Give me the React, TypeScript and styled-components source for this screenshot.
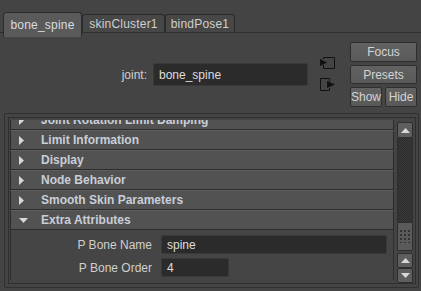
import React from 'react';
import styled, { createGlobalStyle } from 'styled-components';

const GlobalStyle = createGlobalStyle`
  html, body {
    margin: 0;
    padding: 0;
    background: #444444;
  }
  body {
    font-family: "Liberation Sans", Arial, sans-serif;
    font-size: 12px;
    color: #d2d2d2;
  }
`;

const Window = styled.div`
  width: 421px;
  height: 291px;
  background: #444444;
  display: flex;
  flex-direction: column;
  overflow: hidden;
`;

const TabBar = styled.div`
  display: flex;
  align-items: flex-end;
  height: 33px;
  padding-left: 3px;
  box-sizing: border-box;
  border-bottom: 1px solid #2f2f2f;
`;

const Tab = styled.div<{ active?: boolean; w: number }>`
  position: relative;
  box-sizing: border-box;
  height: ${p => (p.active ? '25px' : '18px')};
  margin-bottom: ${p => (p.active ? '-5px' : '0')};
  padding: ${p => (p.active ? '5px 0 0' : '2px 0 0')};
  width: ${p => p.w}px;
  text-align: center;
  background: ${p => (p.active ? '#5a5a5a' : '#474747')};
  border: 1px solid #2b2b2b;
  border-bottom: none;
  border-radius: 3px 3px 0 0;
  color: ${p => (p.active ? '#d8dce2' : '#cfcfcf')};
  font-size: 12px;
  letter-spacing: 0.2px;
  z-index: ${p => (p.active ? 1 : 0)};
`;

const HeaderArea = styled.div`
  display: flex;
  justify-content: flex-end;
  align-items: flex-start;
  height: 80px;
  box-sizing: border-box;
  padding: 9px 4px 0 0;
`;

const JointGroup = styled.div`
  display: flex;
  align-items: center;
  gap: 6px;
  margin-top: 21px;
`;

const Label = styled.span`
  color: #d0d0d0;
  font-size: 12px;
`;

const Field = styled.div<{ w: number; h?: number }>`
  box-sizing: border-box;
  width: ${p => p.w}px;
  height: ${p => p.h ?? 19}px;
  background: #2b2b2b;
  border: 1px solid #393939;
  border-radius: 2px;
  color: #dedede;
  font-size: 12px;
  padding-left: 5px;
  display: flex;
  align-items: center;
`;

const IconCol = styled.div`
  display: flex;
  flex-direction: column;
  width: 18px;
  margin-left: 12px;
  margin-top: 14px;
  gap: 9px;
`;

const ButtonCol = styled.div`
  display: grid;
  grid-template-columns: 32px 32px;
  column-gap: 3px;
  row-gap: 3px;
  width: 67px;
  margin-left: 12px;
`;

const Button = styled.div<{ span?: boolean; h?: number }>`
  grid-column: ${p => (p.span ? '1 / span 2' : 'auto')};
  box-sizing: border-box;
  height: ${p => p.h ?? 19}px;
  background: linear-gradient(#626262, #595959);
  border: 1px solid #2e2e2e;
  border-radius: 2px;
  color: #d4d4d4;
  font-size: 12px;
  display: flex;
  align-items: center;
  justify-content: center;
`;

const Frame = styled.div`
  margin-left: 4px;
  width: 415px;
  height: 175px;
  box-sizing: border-box;
  border: 1px solid #303030;
  border-radius: 2px;
  padding: 3px 2px 3px 3px;
`;

const Inner = styled.div`
  box-sizing: border-box;
  height: 100%;
  border: 1px solid #2f2f2f;
  padding: 2px 1px 0 1px;
  display: flex;
  gap: 3px;
`;

const ListViewport = styled.div`
  width: 384px;
  height: 160px;
  overflow: hidden;
`;

const ListBody = styled.div`
  margin-top: -10px;
`;

const SectionHeader = styled.div`
  box-sizing: border-box;
  height: 20px;
  background: #525252;
  border: 1px solid #2c2c2c;
  border-top-color: #5e5e5e;
  display: flex;
  align-items: center;
  padding-left: 8px;
  color: #c9ced8;
  font-weight: bold;
  font-size: 12px;
  border-bottom: 1px solid #2c2c2c;
`;

const Arrow = styled.span`
  width: 22px;
  display: flex;
  align-items: center;
`;

const SectionBody = styled.div`
  box-sizing: border-box;
  border: 1px solid #2e2e2e;
  border-top: none;
  background: #454545;
  padding: 5px 6px 5px 0;
  display: grid;
  grid-template-columns: 141px 1fr;
  column-gap: 9px;
  row-gap: 4px;
  align-items: center;
`;

const AttrLabel = styled.span`
  text-align: right;
  color: #cfcfcf;
`;

const ScrollBar = styled.div`
  width: 16px;
  display: flex;
  flex-direction: column;
  padding-top: 2px;
`;

const ScrollBtn = styled.div<{ h: number }>`
  box-sizing: border-box;
  height: ${p => p.h}px;
  background: #5e5e5e;
  border: 1px solid #2e2e2e;
  border-radius: 2px;
  display: flex;
  align-items: center;
  justify-content: center;
`;

const Trough = styled.div`
  height: 84px;
  background-color: #2d2d2d;
  background-image: repeating-conic-gradient(#3b3b3b 0 25%, #2b2b2b 0 50%);
  background-size: 2px 2px;
  border-left: 1px solid #2e2e2e;
  border-right: 1px solid #2e2e2e;
`;

const Thumb = styled.div`
  box-sizing: border-box;
  height: 29px;
  background: #5a5a5a;
  border: 1px solid #2e2e2e;
  border-radius: 1px;
  display: flex;
  align-items: center;
  justify-content: center;
  margin-bottom: 2px;
`;

const Triangle = ({ dir, color = '#d8d8d8' }: { dir: 'up' | 'down' | 'right'; color?: string }) => {
  const pts = {
    up: '0,5 4.5,0 9,5',
    down: '0,0 9,0 4.5,5',
    right: '0,0 5,4.5 0,9',
  }[dir];
  const w = dir === 'right' ? 5 : 9;
  const h = dir === 'right' ? 9 : 5;
  return (
    <svg width={w} height={h} viewBox={`0 0 ${w} ${h}`}>
      <polygon points={pts} fill={color} />
    </svg>
  );
};

const InputIcon = () => (
  <svg width="16" height="13" viewBox="0 0 16 13">
    <path d="M3.5 9 V12.5 H14.5 V1.5 H3.5 V3" fill="none" stroke="#111" />
    <polygon points="0,3 7,6.5 0,10" fill="#111" />
  </svg>
);

const OutputIcon = () => (
  <svg width="16" height="13" viewBox="0 0 16 13">
    <path d="M9.5 3.5 V0.5 H0.5 V12.5 H9.5 V10" fill="none" stroke="#111" />
    <polygon points="7,3 15,6.5 7,10" fill="#111" />
  </svg>
);

const Dots = () => (
  <svg width="10" height="13" viewBox="0 0 10 13">
    {[0, 1, 2, 3].map(r =>
      [0, 1, 2].map(c => (
        <rect key={`${r}-${c}`} x={c * 4} y={r * 4} width="2" height="2" fill="#333" />
      ))
    )}
  </svg>
);

const sections = [
  'Joint Rotation Limit Damping',
  'Limit Information',
  'Display',
  'Node Behavior',
  'Smooth Skin Parameters',
];

const App = () => {
  return (
    <Window>
      <GlobalStyle />
      <TabBar>
        <Tab active w={79}>bone_spine</Tab>
        <Tab w={83}>skinCluster1</Tab>
        <Tab w={70}>bindPose1</Tab>
      </TabBar>

      <HeaderArea>
        <JointGroup>
          <Label>joint:</Label>
          <Field w={155} h={23}>bone_spine</Field>
        </JointGroup>
        <IconCol>
          <InputIcon />
          <OutputIcon />
        </IconCol>
        <ButtonCol>
          <Button span h={20}>Focus</Button>
          <Button span h={19}>Presets</Button>
          <Button h={20}>Show</Button>
          <Button h={20}>Hide</Button>
        </ButtonCol>
      </HeaderArea>

      <Frame>
        <Inner>
          <ListViewport>
            <ListBody>
              {sections.map(s => (
                <SectionHeader key={s}>
                  <Arrow><Triangle dir="right" /></Arrow>
                  {s}
                </SectionHeader>
              ))}
              <SectionHeader>
                <Arrow><Triangle dir="down" /></Arrow>
                Extra Attributes
              </SectionHeader>
              <SectionBody>
                <AttrLabel>P Bone Name</AttrLabel>
                <Field w={226}>spine</Field>
                <AttrLabel>P Bone Order</AttrLabel>
                <Field w={68}>4</Field>
              </SectionBody>
            </ListBody>
          </ListViewport>
          <ScrollBar>
            <ScrollBtn h={16}><Triangle dir="up" /></ScrollBtn>
            <Trough />
            <Thumb><Dots /></Thumb>
            <ScrollBtn h={15}><Triangle dir="up" /></ScrollBtn>
            <ScrollBtn h={15}><Triangle dir="down" /></ScrollBtn>
          </ScrollBar>
        </Inner>
      </Frame>
    </Window>
  );
};

export default App;
